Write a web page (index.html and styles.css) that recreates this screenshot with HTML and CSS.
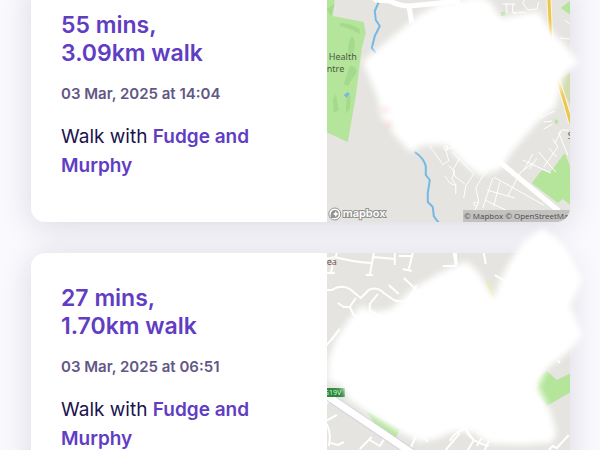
FILE: index.html
```html
<!DOCTYPE html>
<html lang="en">
<head>
<meta charset="utf-8">
<meta name="viewport" content="width=device-width, initial-scale=1">
<title>Walks</title>
<link rel="stylesheet" href="styles.css">
</head>
<body>
<main class="walks">
  <article class="card">
    <div class="details">
      <h2>55 mins,<br>3.09km walk</h2>
      <time class="date" datetime="2025-03-03T14:04">03 Mar, 2025 at 14:04</time>
      <p class="dogs">Walk with <strong>Fudge and Murphy</strong></p>
    </div>
    <div class="map">
      <div class="map-view">
        <svg class="tiles" viewBox="327 -20 243 242" preserveAspectRatio="xMidYMid slice" aria-hidden="true">
          <rect class="land" x="300" y="-30" width="300" height="260"/>
          <path class="park" d="M326-20H337L333 16L364 22L366 33L362 48L356 96L348 142L326 132Z"/>
          <path class="wood" d="M340 23q11 0 20 6v5q-10-6-20-8zM352 36q5 4 2 15l-5 4q-2-10 3-19zM350 66q6-1 7 6l-9 14-4-2zM333 99l3-5 3 16-5 3zM327 9l8-5-4 12zM347 98l4-3-1 14-4 4z"/>
          <path class="pond" d="M344 95l4-3 2 2-3 4z"/>
          <path class="park" d="M561 8l10-8v15zM532 183l10-13 8 3 15-20 6 15v37l-8-6-5 4zM501 12h4v4h-4zM555 119l3 1v4l-3-1z"/>
          <path class="verge" d="M559 80l12-8v35z"/>
          <path class="creek" d="M379 2l-4 9 1 9 4 6-5 10-3 12 4 5M415 152q9 6 11 14v9l4 5-2 13v9l5 5 1 9q6 10 16 14"/>
          <path class="street" d="M503 4h13M507 4v9M513 4v9l3-1M526-2l-3 5 5 7 9-1 2-7M514 14q8-3 13-1M560 38l10 1M565 20l5 4M430 146l12 17M450 142l4 5-9 3M447 145l-1 5 3 11-7 4M449 166l6 5-3 8 4 6v9M445 176l5 7 7 3M452 152q10 10 22 22l-8 12-2 12M460 158l-7 12 2 6 10 8M495 164l-12 12-7 12 3 14-4 8M493 178l-10 30M494 177l50 28M487 190l28 8M521 172l-13 24M500 182l-6 24M485 200l25 12M520 173l13-10M523 160l28 13M533 154l-9 16M537 158l-7 11M539 152l17 20M549 148l8 9M553 139l5 8-14 20M561 132l-6 11M569 130h-7l-3 3 9 22M540 118l15-7M544 122l8-1M544 129l9-5"/>
          <circle class="street" cx="446" cy="148" r="2"/>
          <circle class="street" cx="476" cy="204" r="2"/>
          <path class="major" d="M370-6l6 6 14 1q10 5 20 5l50-5M409 5l3 18M500 162l59 49"/>
          <path class="road-edge" d="M549-5l2 45M557 78q8 22 14 45"/>
          <path class="road" d="M549-5l2 45M557 78q8 22 14 45"/>
          <text class="place" x="329" y="60">Health</text>
          <text class="place" x="327" y="72">ntre</text>
          <text class="place" x="568" y="139">S</text>
          <g class="brand">
            <circle cx="335" cy="214" r="6"/>
            <path d="M331 218q-1-8 4-8a4 4 0 1 1 0 8z"/>
            <path class="spark" d="M336 211l1 2 2 1-2 1-1 2-1-2-2-1 2-1z"/>
            <text x="343" y="217">mapbox</text>
          </g>
        </svg>
        <small class="credit"><a href="#">© Mapbox</a> <a href="#">© OpenStreetMap</a></small>
      </div>
      <svg class="cover" viewBox="327 -20 243 242" aria-hidden="true">
        <path d="M365 62L405 29L418 18L440 5L480-2L490 3L500 20L538 13L550 32L562 44L577 62L563 73L554 106L538 119L512 149L499 168L481 174L463 160L448 143L423 143L411 150L398 136L384 118L379 96Z"/>
        <path class="trace" d="M384 109l3 2M387 126l4-3"/>
      </svg>
    </div>
  </article>

  <article class="card">
    <div class="details">
      <h2>27 mins,<br>1.70km walk</h2>
      <time class="date" datetime="2025-03-03T06:51">03 Mar, 2025 at 06:51</time>
      <p class="dogs">Walk with <strong>Fudge and Murphy</strong></p>
    </div>
    <div class="map">
      <div class="map-view">
        <svg class="tiles" viewBox="327 253 243 242" preserveAspectRatio="xMidYMid slice" aria-hidden="true">
          <rect class="land" x="300" y="240" width="300" height="270"/>
          <path class="park" d="M366 411l34 18-4 9-13-4zM533 380l14-9 10 9 14-7v19l-24 14-13-14 4-6z"/>
          <path class="street wide" d="M326 290h6q9-6 18-1l11 9 8-8q8-4 15 3l10 7q8 4 16-2l7-13M389 285l10 9M404 278l16 15M338 303l6 4h6l6-9M350 307l4 8 8 5M378 294l-8 10v7l12 6M335 257q18 5 36 6M326 259l10-2 1-4M334 259l-3 15M327 273h8M374 253l-4 22M366 275h7M374 257l21 2M395 253v12M399 256h13M413 253l-4 16M403 269l9 2M443 266h13l-2-13M456 253l1 12M484 253l2 11M495 275l13 8M327 345l13-16M340 329l-8 11M558 360l2 3M327 403l6-4M337 415l-11 6M327 424q5 10 2 22M331 443l7 2 6-3M360 449l12-12M370 440l10 6 5-8M410 450l6-14M424 437l4 5M446 450l14-17M450 441q5-10 16-12 3 12 23 17M466 429l8 11-7 12M482 438l-5 8M489 441l-4 9M549 450l4-4 4 2 12-13"/>
          <path class="major-edge" d="M323 393l95 64"/>
          <path class="major big" d="M323 393l95 64"/>
          <path class="yellow" d="M487 281l8 18"/>
          <rect class="shield" x="326" y="388" width="19" height="9"/>
          <text class="shield-label" x="324" y="395">G19V</text>
          <text class="place area" x="327" y="265">ea</text>
        </svg>
      </div>
      <svg class="cover" viewBox="327 253 243 242" aria-hidden="true">
        <path d="M330 362L337 341L350 321L362 308L376 314L393 310L414 290L440 275L466 263L477 273L495 303L501 284L511 264L525 243L543 230L560 243L572 260L581 280L569 306L581 335L567 351L546 367L536 387L549 412L555 433L551 441L525 443L490 442L473 430L453 430L434 438L420 440L398 429L367 410L350 398L343 384L330 380Z"/>
      </svg>
    </div>
  </article>
</main>
</body>
</html>
```
FILE: styles.css
```css
* {
  box-sizing: border-box;
}

body {
  margin: 0;
  height: 100vh;
  overflow: hidden;
  background: #f9f9fe;
  color: #20124d;
  font-family: Inter, "Open Sans", sans-serif;
}

.walks {
  display: flex;
  flex-direction: column;
  gap: 31px;
  margin-top: -20px;
  padding: 0 30px 30px 31px;
}

.card {
  display: grid;
  grid-template-columns: 11fr 9fr;
  min-height: 242px;
  border-radius: 14px;
  background: #fff;
  box-shadow: 0 4px 32px rgba(20, 20, 35, 0.14);
}

.details {
  padding: 31px 30px 30px;
}

h2 {
  margin: 0 0 15px;
  color: #603dc3;
  font-size: 23px;
  font-weight: 600;
  line-height: 28px;
}

.date {
  display: block;
  color: #625786;
  font-size: 15px;
  font-weight: 600;
  line-height: 24px;
}

.dogs {
  margin: 16px 0 0;
  font-size: 19px;
  line-height: 29px;
}

.dogs strong {
  color: #603dc3;
  font-weight: 600;
}

.map {
  position: relative;
}

.map-view {
  position: relative;
  height: 100%;
  overflow: hidden;
  border-radius: 0 14px 14px 0;
}

.tiles,
.cover {
  position: absolute;
  inset: 0;
  width: 100%;
  height: 100%;
}

.cover {
  overflow: visible;
  fill: #fff;
  filter: blur(3px);
  pointer-events: none;
}

.cover path {
  stroke: #fff;
  stroke-width: 4;
  stroke-linejoin: round;
}

.cover .trace {
  fill: none;
  stroke: #f4a5a8;
  stroke-width: 3;
}

.land { fill: #e5e4e0; }
.park { fill: #b4e59a; }
.wood { fill: #a3da8b; }
.verge { fill: #d2dcae; }
.pond { fill: #75bcd9; }

.creek,
.street,
.major,
.major-edge,
.road,
.road-edge,
.yellow {
  fill: none;
  stroke-linejoin: round;
}

.creek { stroke: #74b9e2; stroke-width: 2; }
.street { stroke: #fff; stroke-width: 1; }
.wide { stroke-width: 2; }
.major { stroke: #fff; stroke-width: 5; }
.major-edge { stroke: #d4d2df; stroke-width: 9; }
.big { stroke-width: 7; }
.road-edge { stroke: #fff6d8; stroke-width: 5; }
.road { stroke: #eac650; stroke-width: 3; }
.yellow { stroke: #e9e5a0; stroke-width: 3; }

.place {
  fill: #4d5a45;
  font-family: "Noto Sans", sans-serif;
  font-size: 9px;
}

.area { fill: #695652; }
.shield { fill: #278b3b; }

.shield-label {
  fill: #dff2d8;
  font-family: "Noto Sans", sans-serif;
  font-size: 7px;
}

.brand {
  fill: #fff;
  stroke: #92928f;
  stroke-width: 1;
}

.brand path { fill: #92928f; stroke: none; }
.brand .spark { fill: #fff; }

.brand text {
  font-family: Inter, sans-serif;
  font-size: 11px;
  font-weight: 600;
  stroke-width: 2;
  paint-order: stroke;
}

.credit {
  position: absolute;
  right: 0;
  bottom: 0;
  width: 107px;
  padding-left: 1px;
  overflow: hidden;
  background: #c3c2c0;
  font-family: "Open Sans", sans-serif;
  font-size: 8px;
  line-height: 12px;
  white-space: nowrap;
}

.credit a {
  color: #4b4b4b;
  text-decoration: none;
}
```
